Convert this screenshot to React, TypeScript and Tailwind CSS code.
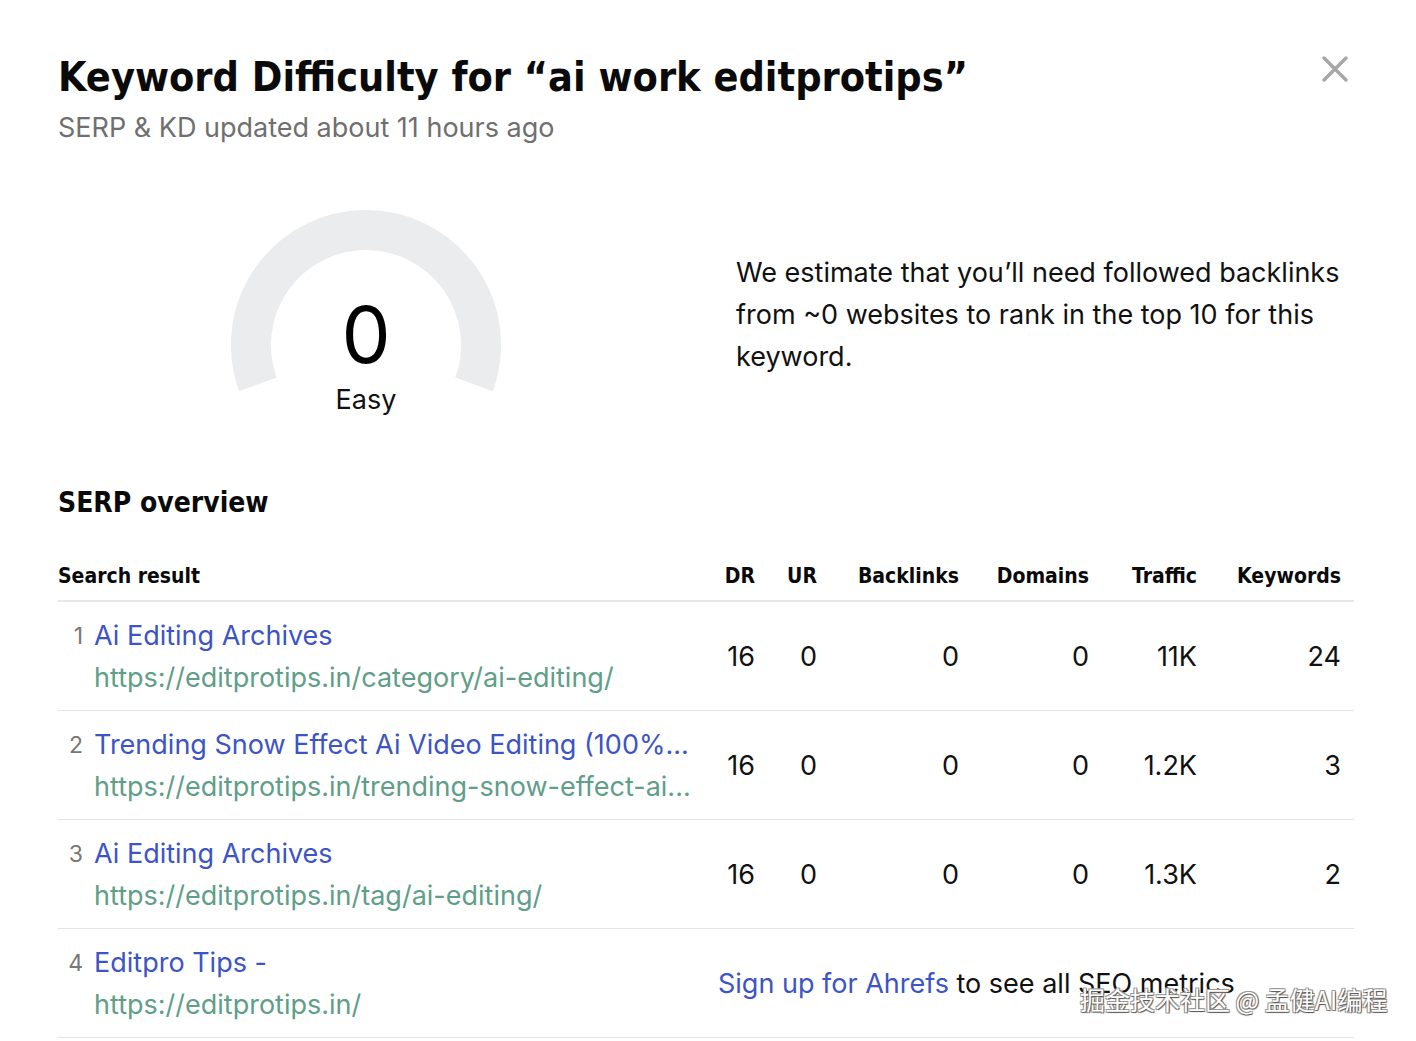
import React from 'react';

const heading = "font-['Liberation_Sans_Narrow','DejaVu_Sans_Condensed',Roboto,sans-serif] font-bold";
const body = "font-['Inter','Noto_Sans',sans-serif]";

type Row = {
  n: number;
  title: string;
  url: string;
  metrics?: string[];
};

const rows: Row[] = [
  {
    n: 1,
    title: 'Ai Editing Archives',
    url: 'https://editprotips.in/category/ai-editing/',
    metrics: ['16', '0', '0', '0', '11K', '24'],
  },
  {
    n: 2,
    title: 'Trending Snow Effect Ai Video Editing (100%...',
    url: 'https://editprotips.in/trending-snow-effect-ai...',
    metrics: ['16', '0', '0', '0', '1.2K', '3'],
  },
  {
    n: 3,
    title: 'Ai Editing Archives',
    url: 'https://editprotips.in/tag/ai-editing/',
    metrics: ['16', '0', '0', '0', '1.3K', '2'],
  },
  {
    n: 4,
    title: 'Editpro Tips -',
    url: 'https://editprotips.in/',
  },
];

const cols = 'grid grid-cols-[minmax(0,1fr)_60px_62px_142px_130px_108px_144px] pr-[13px]';

const Gauge: React.FC = () => (
  <div className="relative w-[270px] h-[210px]">
    <svg width="270" height="190" viewBox="0 0 270 190" className="block">
      <path
        d="M 26.94 174.33 A 115 115 0 1 1 243.06 174.33"
        fill="none"
        stroke="#ebecee"
        strokeWidth="40"
      />
    </svg>
    <div className="absolute left-0 right-0 top-[80px] text-center text-[78px] leading-[90px] text-black">0</div>
    <div className="absolute left-0 right-0 top-[174px] text-center text-[27px] leading-[32px] text-[#111]">Easy</div>
  </div>
);

const App: React.FC = () => {
  return (
    <div className={`relative w-[1416px] h-[1041px] bg-white overflow-hidden pl-[58px] pr-[62px] ${body}`}>
      <button className="absolute top-[55px] right-[67px] w-[28px] h-[28px] flex items-center justify-center">
        <svg width="28" height="28" viewBox="0 0 28 28">
          <path d="M3 3 L25 25 M25 3 L3 25" stroke="#a7a7a7" strokeWidth="3.5" strokeLinecap="round" />
        </svg>
      </button>

      <h1 className={`pt-[54px] text-[41px] leading-[46px] text-[#0a0a0a] ${heading}`}>
        Keyword Difficulty for “ai work editprotips”
      </h1>
      <p className="mt-[12px] text-[27px] leading-[32px] text-[#6f6f6f]">SERP &amp; KD updated about 11 hours ago</p>

      <div className="flex items-start mt-[66px]">
        <div className="w-[616px] shrink-0 flex justify-center">
          <Gauge />
        </div>
        <p className="ml-[62px] mt-[42px] w-[618px] shrink-0 text-[27px] leading-[42px] text-[#111]">
          We estimate that you’ll need followed backlinks from ~0 websites to rank in the top 10 for this keyword.
        </p>
      </div>

      <h2 className={`mt-[66px] text-[28px] leading-[34px] text-[#0a0a0a] ${heading}`}>SERP overview</h2>

      <div className="mt-[44px]">
        <div className={`${cols} pb-[12px] border-b-2 border-[#e8e8e8] text-[21px] leading-[24px] text-[#0a0a0a] ${heading}`}>
          <div>Search result</div>
          <div className="text-right">DR</div>
          <div className="text-right">UR</div>
          <div className="text-right">Backlinks</div>
          <div className="text-right">Domains</div>
          <div className="text-right">Traffic</div>
          <div className="text-right">Keywords</div>
        </div>

        {rows.map((r) => (
          <div key={r.n} className={`${cols} items-center pt-[13px] pb-[11px] border-b border-[#e4e4e4]`}>
            <div className="flex min-w-0">
              <div className="w-[25px] shrink-0 text-right text-[23px] leading-[42px] text-[#777]">{r.n}</div>
              <div className="ml-[11px] min-w-0">
                <div className="truncate text-[27px] leading-[42px] text-[#3d54c6]">{r.title}</div>
                <div className="truncate text-[27px] leading-[42px] text-[#5f9e88]">{r.url}</div>
              </div>
            </div>
            {r.metrics ? (
              r.metrics.map((m, i) => (
                <div key={i} className="text-right text-[27px] leading-[32px] text-[#111]">
                  {m}
                </div>
              ))
            ) : (
              <div className="col-span-6 pl-[23px] text-[27px] leading-[32px] text-[#111]">
                <span className="text-[#3d54c6]">Sign up for Ahrefs</span> to see all SEO metrics
              </div>
            )}
          </div>
        ))}
      </div>

      <div className="absolute left-[1080px] top-[983px] text-[25px] leading-[32px] text-white font-['Noto_Sans_CJK_SC',sans-serif] [text-shadow:1px_1px_1px_#555,-1px_-1px_0_#999,1px_-1px_0_#999,-1px_1px_0_#999] whitespace-nowrap">
        掘金技术社区 @ 孟健AI编程
      </div>
    </div>
  );
};

export default App;
